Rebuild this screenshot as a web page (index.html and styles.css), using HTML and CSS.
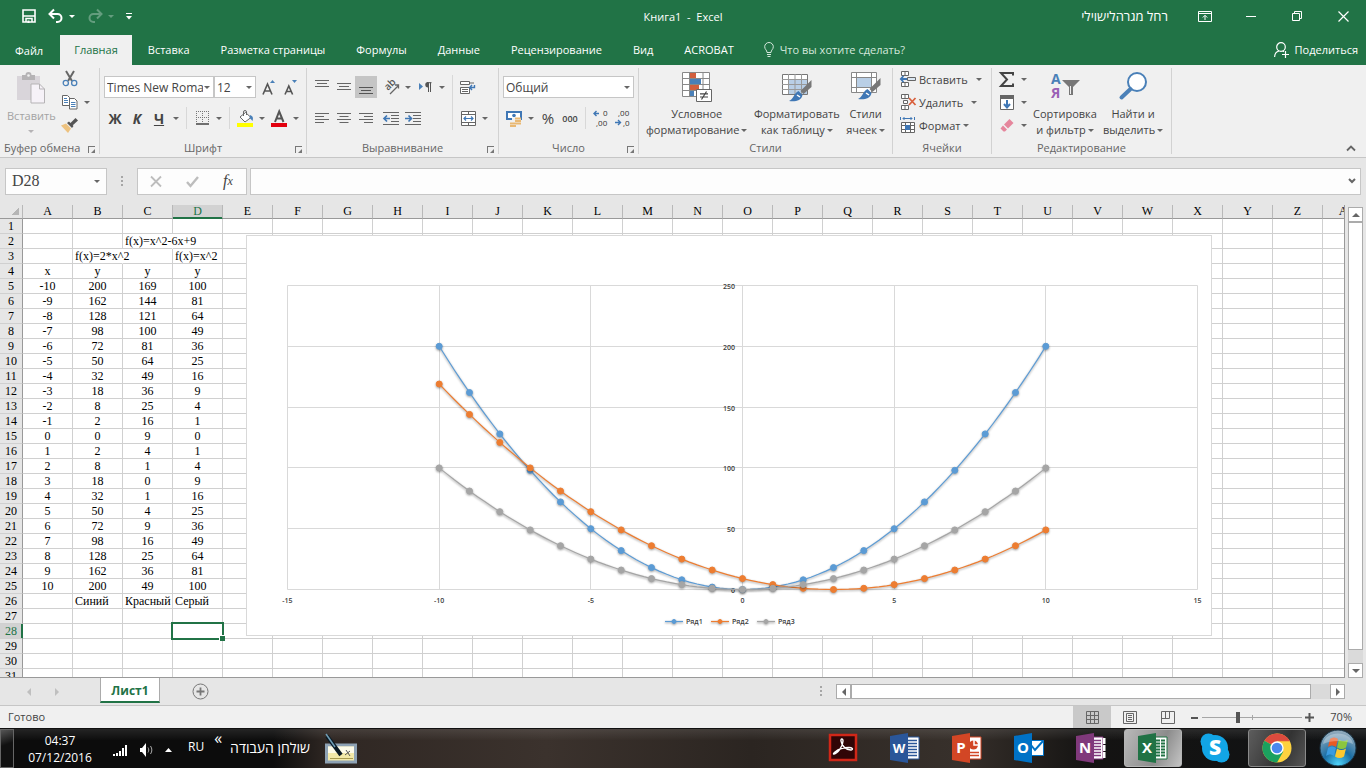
FILE: index.html
```html
<!DOCTYPE html>
<html lang="ru">
<head>
    <meta charset="UTF-8">
    <meta name="viewport" content="width=device-width, initial-scale=1.0">
    <title>Книга1 - Excel</title>
    <link rel="stylesheet" href="styles.css">
</head>
<body>
    <header class="titlebar">
        <div class="quick-access">
            <button class="quick" aria-label="Сохранить">
                <svg width="14" height="14" viewBox="0 0 14 14"><path d="M1 1h12v12H1z" fill="none" stroke="#fff" stroke-width="1.600"/><path d="M1 7h12M4 13v-3.500h6V13" fill="none" stroke="#fff" stroke-width="1.500"/><path d="M5.500 11.500h2V14h-2z" fill="#fff"/></svg>
            </button>
            <button class="quick" aria-label="Отменить">
                <svg width="16" height="14" viewBox="0 0 16 14"><path d="M2 5h7.500a4 4 0 0 1 0 8H8" fill="none" stroke="#fff" stroke-width="2"/><path d="M6 0.500L1.500 5 6 9.500" fill="none" stroke="#fff" stroke-width="2"/></svg>
                <i class="caret"></i>
            </button>
            <button class="quick faded" aria-label="Вернуть">
                <svg width="16" height="14" viewBox="0 0 16 14"><path d="M14 5H6.500a4 4 0 0 0 0 8H8" fill="none" stroke="#fff" stroke-width="2"/><path d="M10 0.500L14.500 5 10 9.500" fill="none" stroke="#fff" stroke-width="2"/></svg>
                <i class="caret"></i>
            </button>
            <button class="quick" aria-label="Настройка панели">
                <svg width="6" height="7" viewBox="0 0 6 7"><path d="M0 .5h6" stroke="#fff"/><path d="M0 3h6L3 6.500z" fill="#fff"/></svg>
            </button>
        </div>
        <h1 class="title">Книга1&nbsp; -&nbsp; Excel</h1>
        <div class="window-controls">
            <span class="user" dir="rtl">רחל מגרהלישוילי</span>
            <button aria-label="Параметры ленты"><svg width="14" height="11" viewBox="0 0 14 11"><path d="M.5.5h13v10H.5zM.5 2.500h13M7 9V4.500M4.800 6.500L7 4.300l2.200 2.200" fill="none" stroke="#fff"/></svg></button>
            <button aria-label="Свернуть"><svg width="10" height="10" viewBox="0 0 10 10"><path d="M0 5.500h10" stroke="#fff"/></svg></button>
            <button aria-label="Восстановить"><svg width="10" height="10" viewBox="0 0 10 10"><path d="M.5 2.500h7v7h-7zM2.500 2.500v-2h7v7h-2" fill="none" stroke="#fff"/></svg></button>
            <button aria-label="Закрыть"><svg width="11" height="11" viewBox="0 0 11 11"><path d="M.5.5l10 10M10.500.5l-10 10" stroke="#fff" stroke-width="1.2"/></svg></button>
        </div>
    </header>

    <nav class="tabs">
        <button class="tab file">Файл</button>
        <button class="tab active">Главная</button>
        <button class="tab">Вставка</button>
        <button class="tab">Разметка страницы</button>
        <button class="tab">Формулы</button>
        <button class="tab">Данные</button>
        <button class="tab">Рецензирование</button>
        <button class="tab">Вид</button>
        <button class="tab">ACROBAT</button>
        <button class="tell-me">
            <svg width="10" height="15" viewBox="0 0 10 15"><path d="M3 10.500C3 8 .700 7.500.700 4.700a4.300 4.200 0 0 1 8.600 0C9.300 7.500 7 8 7 10.500zM3 12.500h4M3.500 14.500h3" fill="none" stroke="#d5e8dc"/></svg>
            Что вы хотите сделать?
        </button>
        <button class="share">
            <svg width="15" height="16" viewBox="0 0 15 16"><circle cx="7" cy="5" r="4.300" fill="none" stroke="#fff" stroke-width="1.200"/><path d="M.6 15c.2-3.500 2-5.500 4.400-6M8.500 9l1.500.8M8 12.500h7M11.500 9v7" fill="none" stroke="#fff" stroke-width="1.200"/></svg>
            Поделиться
        </button>
    </nav>

    <section class="ribbon">
        <div class="group clipboard">
            <div class="group-body">
                <button class="big disabled">
                    <svg width="30" height="32" viewBox="0 0 30 32"><path d="M1 4h23v24H1z" fill="#d9d5da"/><path d="M6 3h3.500a3 3 0 0 1 6 0H19v5H6z" fill="#b5b3b5"/><circle cx="12.500" cy="3.500" r="1.300" fill="#f0f0f0"/><path d="M15 12h8.500l5 5v14H15z" fill="#f6f2f8" stroke="#b5b3b5"/><path d="M23.500 12v5h5" fill="none" stroke="#b5b3b5"/></svg>
                    <span>Вставить</span>
                    <i class="caret"></i>
                </button>
                <div class="stack">
                    <div class="row"><button class="tool" aria-label="Вырезать"><svg width="16" height="16" viewBox="0 0 16 16"><path d="M4 0l6 10M12 0L6 10" stroke="#666" stroke-width="2"/><circle cx="3.800" cy="12" r="2.600" fill="none" stroke="#4a80b8" stroke-width="1.300"/><circle cx="12.200" cy="12" r="2.600" fill="none" stroke="#4a80b8" stroke-width="1.300"/></svg></button></div>
                    <div class="row"><button class="tool" aria-label="Копировать"><svg width="16" height="15" viewBox="0 0 16 15"><path d="M.5.5h5l2 2v8h-7zM7.500 3.500h5l2.500 2.500v8H7.500z" fill="#fff" stroke="#666"/><path d="M2 3.500h3M2 5.500h4M2 7.500h4M9 7.500h4.500M9 9.500h4.500M9 11.500h4.500" stroke="#4a80b8"/></svg></button><button class="drop" aria-label="Ещё"><i class="caret"></i></button></div>
                    <div class="row"><button class="tool" aria-label="Формат по образцу"><svg width="17" height="15" viewBox="0 0 17 15"><path d="M0 7.500l5-2 5 5L7 15z" fill="#edc27f"/><path d="M6 5l2-1.500 4.500 4.500L11 10z" fill="#555"/><path d="M9 5.500L14.500 0 17 2.500 11 8z" fill="#555"/></svg></button></div>
                </div>
            </div>
            <footer class="group-foot">Буфер обмена<button class="launcher" aria-label="Параметры буфера"></button></footer>
        </div>

        <div class="group font">
            <div class="group-body lines">
                <div class="row">
                    <span class="combo font-name"><select aria-label="Шрифт"><option>Times New Roma</option></select></span>
                    <span class="combo font-size"><select aria-label="Размер шрифта"><option>12</option></select></span>
                    <button class="tool" aria-label="Увеличить размер"><svg width="14" height="17" viewBox="0 0 14 17"><path d="M1 15.500L5.500 5 10 15.500M2.500 12h6" fill="none" stroke="#555" stroke-width="1.600"/><path d="M8 4h5l-2.500-3z" fill="#4a80b8"/></svg></button>
                    <button class="tool" aria-label="Уменьшить размер"><svg width="14" height="17" viewBox="0 0 14 17"><path d="M1 15.500L4.800 7 8.600 15.500M2.300 12.500h5" fill="none" stroke="#555" stroke-width="1.600"/><path d="M8 1h5l-2.500 3z" fill="#4a80b8"/></svg></button>
                </div>
                <div class="row">
                    <button class="tool glyph">Ж</button>
                    <button class="tool glyph italic">К</button>
                    <button class="tool glyph under">Ч</button>
                    <button class="drop" aria-label="Подчёркивание"><i class="caret"></i></button>
                    <span class="sep"></span>
                    <button class="tool" aria-label="Границы"><svg width="13" height="14" viewBox="0 0 13 14"><path d="M.5 0v12M6.500 0v12M12.500 0v12M0 .5h13M0 6.500h13" stroke="#777" stroke-dasharray="1 1"/><path d="M0 13h13" stroke="#444" stroke-width="1.500"/></svg></button>
                    <button class="drop" aria-label="Виды границ"><i class="caret"></i></button>
                    <span class="sep"></span>
                    <button class="tool" aria-label="Цвет заливки"><svg width="17" height="17" viewBox="0 0 17 17"><path d="M3 7l5.500-4.500L14 7.500 8 12z" fill="#fff" stroke="#666"/><path d="M6.500 6V2a1.500 1.500 0 0 1 3 0v3" fill="none" stroke="#666"/><path d="M13 5c3 1 3.500 3 2.500 6-1-1-1.500-2-3-3z" fill="#4a80b8"/><path d="M0 13h16v4H0z" fill="#ff0"/></svg></button>
                    <button class="drop" aria-label="Цвета заливки"><i class="caret"></i></button>
                    <button class="tool" aria-label="Цвет текста"><svg width="17" height="17" viewBox="0 0 17 17"><path d="M4 12L8.200 1.500 12.500 12M5.500 8.500h5.500" fill="none" stroke="#555" stroke-width="2"/><path d="M0 13h16v4H0z" fill="#e3000f"/></svg></button>
                    <button class="drop" aria-label="Цвета текста"><i class="caret"></i></button>
                </div>
            </div>
            <footer class="group-foot">Шрифт<button class="launcher" aria-label="Параметры шрифта"></button></footer>
        </div>

        <div class="group align">
            <div class="group-body">
                <div class="lines">
                    <div class="row">
                        <button class="tool" aria-label="По верхнему краю"><svg width="14" height="14" viewBox="0 0 14 14"><path d="M0 .5h14M2 3.500h10M0 6.500h14" stroke="#666"/></svg></button>
                        <button class="tool" aria-label="По середине"><svg width="14" height="14" viewBox="0 0 14 14"><path d="M0 3.500h14M2 6.500h10M0 9.500h14" stroke="#666"/></svg></button>
                        <button class="tool pressed" aria-label="По нижнему краю"><svg width="14" height="14" viewBox="0 0 14 14"><path d="M0 7.500h14M2 10.500h10M0 13.500h14" stroke="#555"/></svg></button>
                        <span class="space"></span>
                        <button class="tool" aria-label="Ориентация"><svg width="20" height="20" viewBox="0 0 20 20"><text x="0" y="0" transform="translate(7 14) rotate(-45)" font-family="Open Sans" font-size="10" font-weight="600" fill="#555">ab</text><path d="M9 17L17.500 8.500M14 8h3.500v3.500" fill="none" stroke="#666" stroke-width="1.300"/></svg></button>
                        <button class="drop" aria-label="Виды ориентации"><i class="caret"></i></button>
                        <button class="tool" aria-label="Направление текста"><svg width="13" height="10" viewBox="0 0 13 10"><path d="M0 1v7l4-3.500z" fill="#4a80b8"/><path d="M12.500 .7H8M9.500.5V10M11.500.5V10" stroke="#555" fill="none"/><path d="M9 0a2.700 2.700 0 0 0 0 5.500z" fill="#555"/></svg></button>
                        <button class="drop" aria-label="Виды направления"><i class="caret"></i></button>
                    </div>
                    <div class="row">
                        <button class="tool" aria-label="По левому краю"><svg width="14" height="11" viewBox="0 0 14 11"><path d="M0 .5h14M0 3.500h9M0 6.500h14M0 9.500h9" stroke="#666"/></svg></button>
                        <button class="tool" aria-label="По центру"><svg width="14" height="11" viewBox="0 0 14 11"><path d="M0 .5h14M2.500 3.500h9M0 6.500h14M2.500 9.500h9" stroke="#666"/></svg></button>
                        <button class="tool" aria-label="По правому краю"><svg width="14" height="11" viewBox="0 0 14 11"><path d="M0 .5h14M5 3.500h9M0 6.500h14M5 9.500h9" stroke="#666"/></svg></button>
                        <span class="space"></span>
                        <button class="tool" aria-label="Уменьшить отступ"><svg width="16" height="13" viewBox="0 0 16 13"><path d="M0 .5h16M8 3.500h8M8 6.500h8M8 9.500h8M0 12.500h16" stroke="#666"/><path d="M7 6.500H1.500M4 3.500l-3 3 3 3" fill="none" stroke="#3f77b5" stroke-width="1.700"/></svg></button>
                        <button class="tool" aria-label="Увеличить отступ"><svg width="16" height="13" viewBox="0 0 16 13"><path d="M0 .5h16M8 3.500h8M8 6.500h8M8 9.500h8M0 12.500h16" stroke="#666"/><path d="M0 6.500h6M3.500 3.500l3 3-3 3" fill="none" stroke="#3f77b5" stroke-width="1.700"/></svg></button>
                    </div>
                </div>
                <span class="sep tall"></span>
                <div class="lines">
                    <div class="row"><button class="tool" aria-label="Перенести текст"><svg width="16" height="15" viewBox="0 0 16 15"><path d="M.5 1.500h9v3h-9zM.5 7.500h9v6h-9z" fill="#fff" stroke="#666"/><path d="M2 9.500h6M2 11.500h6M10 3h4" stroke="#666"/><path d="M14.500 5v2.500H10M12 5L9.700 7.500 12 10" fill="none" stroke="#3f77b5" stroke-width="1.400"/></svg></button></div>
                    <div class="row"><button class="tool" aria-label="Объединить"><svg width="15" height="15" viewBox="0 0 15 15"><path d="M.5.5h14v14H.5zM.5 3.500h14M.5 11.500h14M7.500.5v3M7.500 11.500v3" fill="#fff" stroke="#666"/><path d="M3 7.500h9M5 5.500l-2 2 2 2M10 5.500l2 2-2 2" fill="none" stroke="#3f77b5" stroke-width="1.200"/></svg></button><button class="drop" aria-label="Виды объединения"><i class="caret"></i></button></div>
                </div>
            </div>
            <footer class="group-foot">Выравнивание<button class="launcher" aria-label="Параметры выравнивания"></button></footer>
        </div>

        <div class="group number">
            <div class="group-body lines">
                <div class="row"><span class="combo format"><select aria-label="Числовой формат"><option>Общий</option></select></span></div>
                <div class="row">
                    <button class="tool" aria-label="Финансовый формат"><svg width="16" height="17" viewBox="0 0 16 17"><path d="M1 2h14v7H1z" fill="#fff" stroke="#3f77b5" stroke-width="2"/><circle cx="8" cy="5.500" r="1.800" fill="#3f77b5"/><path d="M6 8h9v3H6z" fill="#f0f0f0"/><path d="M9 8.500h6M9 11h6M4 13.500h6M4 16h6M10 13.500h5" stroke="#e9b872" stroke-width="2"/></svg></button>
                    <button class="drop" aria-label="Валюты"><i class="caret"></i></button>
                    <button class="tool percent">%</button>
                    <button class="tool zeros">000</button>
                    <span class="sep"></span>
                    <button class="tool" aria-label="Увеличить разрядность"><svg width="16" height="22" viewBox="0 0 16 22"><path d="M6 6.500H1M3.500 4L1 6.500 3.500 9" fill="none" stroke="#3f77b5" stroke-width="1.400"/><text x="10" y="9" font-family="Open Sans" font-size="8" fill="#333">0</text><text x="3" y="19" font-family="Open Sans" font-size="8" fill="#333">,00</text></svg></button>
                    <button class="tool" aria-label="Уменьшить разрядность"><svg width="16" height="22" viewBox="0 0 16 22"><text x="3" y="9" font-family="Open Sans" font-size="8" fill="#333">,00</text><path d="M0 15.500h5M3 13l2.500 2.500L3 18" fill="none" stroke="#3f77b5" stroke-width="1.400"/><text x="8" y="19" font-family="Open Sans" font-size="8" fill="#333">,0</text></svg></button>
                </div>
            </div>
            <footer class="group-foot">Число<button class="launcher" aria-label="Параметры числа"></button></footer>
        </div>

        <div class="group styles">
            <div class="group-body">
                <button class="big">
                    <svg width="30" height="31" viewBox="0 0 30 31"><path d="M.5 1.500h27v24H.5zM7.500 1.500v24M21 1.500v24M.5 7.500h27M.5 13.500h27M.5 19.500h27" fill="#fff" stroke="#888"/><path d="M8 2h6v5H8zM8 14h9v5H8z" fill="#d35f3e"/><path d="M8 8h11v5H8zM8 20h4v5H8z" fill="#4a80b8"/><path d="M14.500 18.500h15v12h-15z" fill="#fff" stroke="#666"/><path d="M18 22.800h8M18 26h8M24.500 20.500l-5 8" stroke="#444" stroke-width="1.200"/></svg>
                    <span>Условное<br>форматирование<i class="caret"></i></span>
                </button>
                <button class="big">
                    <svg width="30" height="31" viewBox="0 0 30 31"><path d="M.5 3.500h25v20H.5z" fill="#fff" stroke="#777"/><path d="M7 9h18v14H7z" fill="#b9cfe6"/><path d="M6.500 3v20M13 3v20M19.500 3v20M0 8.500h25M0 13.500h25M0 18.500h25" stroke="#999"/><path d="M29.500 9v7l-8 7-3-3z" fill="#777"/><path d="M16.500 20l4 4c-1 6-8 7-13.500 6 4-1 5-8 9.500-10z" fill="#3f77b5"/><path d="M15 24l3 2" stroke="#fff" stroke-width="1.500"/></svg>
                    <span>Форматировать<br>как таблицу<i class="caret"></i></span>
                </button>
                <button class="big">
                    <svg width="30" height="31" viewBox="0 0 30 31"><path d="M.5 1.500h25v20H.5zM5.500 1.500v20M20.500 1.500v20M.5 6.500h25M.5 16.500h25" fill="#fff" stroke="#888"/><path d="M6 7h14v9H6z" fill="#b9cfe6"/><path d="M29.500 7v7l-8 7-3-3z" fill="#777"/><path d="M16.500 18l4 4c-1 6-8 7-13.500 6 4-1 5-8 9.500-10z" fill="#3f77b5"/><path d="M15 22l3 2" stroke="#fff" stroke-width="1.500"/></svg>
                    <span>Стили<br>ячеек<i class="caret"></i></span>
                </button>
            </div>
            <footer class="group-foot">Стили</footer>
        </div>

        <div class="group cells">
            <div class="group-body stack">
                <button class="wide"><svg width="16" height="16" viewBox="0 0 16 16"><path d="M1.500.5h7v4h-7zM5 .5v4M1.500 11.500h7v4h-7zM5 11.500v4" fill="#fff" stroke="#666"/><path d="M7.500 6.500h8v3h-8z" fill="#dbe7f3" stroke="#666"/><path d="M7 8H1M3.500 5L.8 8l2.700 3" fill="none" stroke="#3f77b5" stroke-width="1.800"/></svg><span>Вставить</span><i class="caret apart"></i></button>
                <button class="wide"><svg width="16" height="16" viewBox="0 0 16 16"><path d="M1.500.5h7v4h-7zM5 .5v4M1.500 11.500h7v4h-7zM5 11.500v4M3.500 6.500h4v3h-4z" fill="#fff" stroke="#666"/><path d="M9 4l6.500 7M15.500 4L9 11" stroke="#d9603d" stroke-width="1.800"/></svg><span>Удалить</span><i class="caret apart"></i></button>
                <button class="wide"><svg width="16" height="16" viewBox="0 0 16 16"><path d="M1.500 5.500h13v10h-13zM1.500 8.500h13M1.500 12.500h13M5.500 5.500v10M10.500 5.500v10" fill="#fff" stroke="#666"/><path d="M5 8h5v5H5z" fill="#3f77b5"/><path d="M3 1.500h9M4.500 0L3 1.500 4.500 3M10.500 0L12 1.500 10.500 3M.5 0v3M14.500 0v3" fill="none" stroke="#3f77b5"/></svg><span>Формат</span><i class="caret"></i></button>
            </div>
            <footer class="group-foot">Ячейки</footer>
        </div>

        <div class="group editing">
            <div class="group-body">
                <div class="stack">
                    <div class="row"><button class="tool" aria-label="Сумма"><svg width="16" height="15" viewBox="0 0 16 15"><path d="M14 3.500V1H2l6 6.500L2 14h12v-2.500" fill="none" stroke="#444" stroke-width="2"/></svg></button><button class="drop" aria-label="Функции"><i class="caret"></i></button></div>
                    <div class="row"><button class="tool" aria-label="Заполнить"><svg width="14" height="15" viewBox="0 0 14 15"><path d="M.5.500h13v14H.5z" fill="#fff" stroke="#666"/><path d="M0 0h14v4H0z" fill="#666"/><path d="M7 5v7M4 9l3 3.500L10 9" fill="none" stroke="#3f77b5" stroke-width="2"/></svg></button><button class="drop" aria-label="Направления"><i class="caret"></i></button></div>
                    <div class="row"><button class="tool" aria-label="Очистить"><svg width="14" height="13" viewBox="0 0 14 13"><path d="M4 5.500L9.500 0 13.500 4 8 9.500z" fill="#e5869c"/><path d="M3 6.500l4 4L5 12.500H3.500L.5 9.500z" fill="#e5869c"/></svg></button><button class="drop" aria-label="Виды очистки"><i class="caret"></i></button></div>
                </div>
                <button class="big">
                    <svg width="30" height="31" viewBox="0 0 30 31"><text x="1" y="13" font-family="Open Sans" font-size="14" font-weight="700" fill="#4a80b8">А</text><text x="1" y="27" font-family="Open Sans" font-size="14" font-weight="700" fill="#9a5fb5">Я</text><path d="M12 9h18l-7 7v8h-4v-8z" fill="#777"/><path d="M20.500 15v8" stroke="#f0f0f0"/></svg>
                    <span>Сортировка<br>и фильтр<i class="caret"></i></span>
                </button>
                <button class="big">
                    <svg width="30" height="31" viewBox="0 0 30 31"><circle cx="19" cy="11" r="9" fill="#fff" stroke="#4a80b8" stroke-width="2"/><path d="M12.500 18L3.500 26.500" stroke="#4a80b8" stroke-width="4" stroke-linecap="round"/></svg>
                    <span>Найти и<br>выделить<i class="caret"></i></span>
                </button>
            </div>
            <footer class="group-foot">Редактирование</footer>
        </div>

        <button class="collapse" aria-label="Свернуть ленту"><svg width="10" height="7" viewBox="0 0 10 7"><path d="M1 5.500l4-4 4 4" fill="none" stroke="#666" stroke-width="1.800"/></svg></button>
    </section>

    <section class="formula-bar">
        <span class="name-box"><input type="text" value="D28" aria-label="Имя"><i class="caret"></i></span>
        <span class="grip"></span>
        <div class="fx-box">
            <button aria-label="Отмена"><svg width="12" height="11" viewBox="0 0 12 11"><path d="M1 .5l10 10M11 .5L1 10.500" stroke="#bdbdbd" stroke-width="1.800"/></svg></button>
            <button aria-label="Ввод"><svg width="13" height="11" viewBox="0 0 13 11"><path d="M1 6l3.500 4L12 1" fill="none" stroke="#bdbdbd" stroke-width="2.400"/></svg></button>
            <button class="fx" aria-label="Вставить функцию">f<small>x</small></button>
        </div>
        <div class="formula-box">
            <input type="text" aria-label="Строка формул">
            <svg width="8" height="6" viewBox="0 0 8 6"><path d="M1 1l3 3 3-3" fill="none" stroke="#666" stroke-width="2"/></svg>
        </div>
    </section>

    <main class="workspace">
        <div class="sheet">
            <table class="grid">
                <thead><tr id="columns"></tr></thead>
                <tbody id="rows"></tbody>
            </table>
            <svg class="chart" id="chart" width="966" height="401" viewBox="0 0 966 401" role="img" aria-label="Графики функций"></svg>
        </div>
        <div class="scroll-v">
            <button aria-label="Вверх"><i class="arrow up"></i></button>
            <div class="track"><div class="thumb"></div></div>
            <button aria-label="Вниз"><i class="arrow down"></i></button>
        </div>
    </main>

    <div class="sheet-bar">
        <button class="nav-arrow" aria-label="Предыдущий лист"><i class="arrow left"></i></button>
        <button class="nav-arrow" aria-label="Следующий лист"><i class="arrow right"></i></button>
        <button class="sheet-tab">Лист1</button>
        <button class="add-sheet" aria-label="Новый лист"><svg width="17" height="17" viewBox="0 0 17 17"><circle cx="8.500" cy="8.500" r="7.500" fill="none" stroke="#777"/><path d="M4.500 8.500h8M8.500 4.500v8" stroke="#777" stroke-width="1.800"/></svg></button>
        <span class="grip"></span>
        <div class="scroll-h">
            <button aria-label="Влево"><i class="arrow left"></i></button>
            <div class="track"><div class="thumb"></div></div>
            <button aria-label="Вправо"><i class="arrow right"></i></button>
        </div>
    </div>

    <footer class="status-bar">
        <span class="status">Готово</span>
        <button class="view active" aria-label="Обычный"><svg width="13" height="13" viewBox="0 0 13 13"><path d="M.5.5h12v12H.5zM4.500.5v12M8.500.5v12M.5 4.500h12M.5 8.500h12" fill="none" stroke="#666"/></svg></button>
        <button class="view" aria-label="Разметка страницы"><svg width="14" height="13" viewBox="0 0 14 13"><path d="M.5.5h13v12H.5zM3.500 2.500h7v8h-7zM5 4.500h4M5 6.500h4M5 8.500h4" fill="none" stroke="#666"/></svg></button>
        <button class="view" aria-label="Страничный режим"><svg width="14" height="13" viewBox="0 0 14 13"><path d="M.5.5h13v12H.5zM4.500.5v7M.5 7.500h8V.5" fill="none" stroke="#666"/></svg></button>
        <button class="zoom-step" aria-label="Уменьшить"><svg width="9" height="9" viewBox="0 0 9 9"><path d="M1 5h7" stroke="#555" stroke-width="2"/></svg></button>
        <input class="zoom" type="range" min="0" max="100" value="35" aria-label="Масштаб">
        <button class="zoom-step" aria-label="Увеличить"><svg width="9" height="9" viewBox="0 0 9 9"><path d="M0 4.500h9M4.500 0v9" stroke="#555" stroke-width="2"/></svg></button>
        <span class="zoom-value">70%</span>
    </footer>

    <footer class="taskbar">
        <button class="show-desktop" aria-label="Показать рабочий стол"></button>
        <time class="clock">04:37<br>07/12/2016</time>
        <div class="tray">
            <svg width="15" height="12" viewBox="0 0 15 12"><path d="M0 10h2v2H0zM3 9h2v3H3zM6 7h2v5H6zM9 4h2v8H9zM12 1h2v11h-2z" fill="#fff"/></svg>
            <svg width="13" height="14" viewBox="0 0 13 14"><path d="M0 5h2l4-5v14L2 9H0z" fill="#fff"/><path d="M8 4.500c1 1.500 1 3.500 0 5M10.500 3c1.800 2.500 1.800 5.500 0 8" fill="none" stroke="#aaa"/></svg>
            <svg width="7" height="4" viewBox="0 0 7 4"><path d="M0 4h7L3.500 0z" fill="#fff"/></svg>
        </div>
        <span class="lang">RU</span>
        <span class="chevrons">«</span>
        <span class="desktop" dir="rtl">שולחן העבודה</span>
        <svg width="33" height="29" viewBox="0 0 33 29"><path d="M1.500 11h29v17h-29z" fill="#f2e9a8" stroke="#8ea2b4" stroke-width="3"/><path d="M3 12.500h26V19H3z" fill="#fdfbe8"/><path d="M5 24.500h23" stroke="#a89c50"/><path d="M21 16l4 6M25 17l-5 4" stroke="#555"/><path d="M2 2l14 19" stroke="#0b1a24" stroke-width="4"/><path d="M1 0l9 13" stroke="#6f9db5" stroke-width="1.500"/></svg>
        <div class="apps">
            <button class="app" aria-label="Adobe Reader"><svg width="30" height="30" viewBox="0 0 30 30"><path d="M2 2h26v25H2z" fill="#300506" stroke="#d02718" stroke-width="2.500"/><path d="M6 21c3-.5 9-7 9-13 0-3-2.500-2.500-2 0 .7 5 5 9 10 9 3-.5 1-2.500-2-2.500-5 0-11 2-14 4.500-1.500 1.500-2 2-1 2z" fill="none" stroke="#fff" stroke-width="1.400"/></svg></button>
            <button class="app" aria-label="Word"><svg width="30" height="30" viewBox="0 0 30 30"><path d="M16 4h13v22H16z" fill="#fff" stroke="#2a5699"/><path d="M18 7.500h9M18 10.500h9M18 13.500h9M18 16.500h9M18 19.500h9M18 22.500h9" stroke="#2a5699" stroke-width="1.400"/><path d="M0 3l18-3v30L0 27z" fill="#2a5699"/><text x="9" y="20" text-anchor="middle" font-family="Open Sans" font-size="13" font-weight="700" fill="#fff">W</text></svg></button>
            <button class="app" aria-label="PowerPoint"><svg width="30" height="30" viewBox="0 0 30 30"><path d="M16 4h13v22H16z" fill="#fff" stroke="#d24625"/><circle cx="21.500" cy="12" r="4.500" fill="#d24625"/><path d="M22 7v5h5" fill="none" stroke="#fff" stroke-width="1.500"/><path d="M18 19.500h9M18 22.500h9" stroke="#d24625" stroke-width="1.400"/><path d="M0 3l18-3v30L0 27z" fill="#d24625"/><text x="9" y="20" text-anchor="middle" font-family="Open Sans" font-size="15" font-weight="700" fill="#fff">P</text></svg></button>
            <button class="app" aria-label="Outlook"><svg width="30" height="30" viewBox="0 0 30 30"><path d="M16 7.500h13.500v15H16z" fill="#fff" stroke="#0072c6"/><path d="M17 12l4 5 8-9" fill="none" stroke="#0072c6" stroke-width="2"/><path d="M0 3l18-3v30L0 27z" fill="#0072c6"/><text x="9" y="20" text-anchor="middle" font-family="Open Sans" font-size="15" font-weight="700" fill="#fff">O</text></svg></button>
            <button class="app" aria-label="OneNote"><svg width="30" height="30" viewBox="0 0 30 30"><path d="M16 4h11v22H16z" fill="#fff" stroke="#80397b"/><path d="M27 5h2.500v6H27zM27 12h2.500v6H27zM27 19h2.500v6H27z" fill="#fff"/><path d="M18 7.500h7M18 10.500h7M18 13.500h7M18 16.500h7M18 19.500h7M18 22.500h7" stroke="#80397b" stroke-width="1.400"/><path d="M0 3l18-3v30L0 27z" fill="#80397b"/><text x="9" y="20" text-anchor="middle" font-family="Open Sans" font-size="15" font-weight="700" fill="#fff">N</text></svg></button>
            <button class="app current" aria-label="Excel"><svg width="30" height="30" viewBox="0 0 30 30"><path d="M16 4h13v22H16z" fill="#fff" stroke="#207245"/><path d="M18 7.500h9M18 10.500h9M18 13.500h9M18 16.500h9M18 19.500h9M18 22.500h9" stroke="#207245" stroke-width="2"/><path d="M22.500 5v20" stroke="#fff"/><path d="M0 3l18-3v30L0 27z" fill="#207245"/><text x="9" y="20" text-anchor="middle" font-family="Open Sans" font-size="15" font-weight="700" fill="#fff">X</text></svg></button>
            <button class="app" aria-label="Skype"><svg width="30" height="30" viewBox="0 0 30 30"><circle cx="15" cy="15" r="13" fill="#12a5e6"/><circle cx="8.500" cy="8.500" r="8" fill="#12a5e6"/><circle cx="21.500" cy="21.500" r="8" fill="#12a5e6"/><text x="15" y="22" text-anchor="middle" font-family="Open Sans" font-size="21" font-weight="800" fill="#fff">S</text></svg></button>
            <button class="app open" aria-label="Chrome"><svg width="30" height="30" viewBox="0 0 30 30"><circle cx="15" cy="15" r="14.500" fill="#fdd23f"/><path d="M15 15L2.440 7.750A14.500 14.500 0 0 1 27.560 7.750H15z" fill="#dd4b3e"/><path d="M15 15L2.440 7.750A14.500 14.500 0 0 0 15 29.500L21.300 18.600z" fill="#1ba15f"/><path d="M15 7.750h12.560" stroke="#dd4b3e"/><circle cx="15" cy="15" r="6.700" fill="#fff"/><circle cx="15" cy="15" r="5.300" fill="#4a88ee"/></svg></button>
            <button class="app" aria-label="Пуск">
                <svg width="38" height="38" viewBox="0 0 38 38">
                    <defs><radialGradient id="orb" cx=".5" cy=".95" r=".9"><stop offset="0" stop-color="#4fd4fa"/><stop offset=".45" stop-color="#1a6ea5"/><stop offset="1" stop-color="#8fa9bb"/></radialGradient></defs>
                    <circle cx="19" cy="19" r="18" fill="url(#orb)" stroke="#1a3446"/>
                    <path d="M11 10c3-2 5-2 8 0l-2 8c-3-2-5-2-8 0z" fill="#ea5a24"/><path d="M20 10.500c3 2 6 2 9 0l-2 8c-3 2-6 2-9 0z" fill="#8cc63e"/><path d="M9 19c3-2 5-2 8 0l-2 8c-3-2-5-2-8 0z" fill="#3b9be0"/><path d="M18 19.500c3 2 6 2 9 0l-2 8c-3 2-6 2-9 0z" fill="#fdc82f"/>
                    <path d="M4 15C6 1 32 1 34 15c-8-4-22-4-30 0z" fill="#fff" opacity=".3"/>
                </svg>
            </button>
        </div>
    </footer>

    <script>
        const letters = 'ABCDEFGHIJKLMNOPQRSTUVWXYZ'.split('').concat('AA');
        const rowCount = 31;
        const selected = { col: 3, row: 28 };

        const series = [
            { name: 'Ряд1', color: '#5b9bd5', fn: x => 2 * x * x },
            { name: 'Ряд2', color: '#ed7d31', fn: x => x * x - 6 * x + 9 },
            { name: 'Ряд3', color: '#a5a5a5', fn: x => x * x }
        ];

        // cell text, keyed by address
        const cells = {
            C2: 'f(x)=x^2-6x+9', B3: 'f(x)=2*x^2', D3: 'f(x)=x^2',
            A4: 'x', B4: 'y', C4: 'y', D4: 'y',
            B26: 'Синий', C26: 'Красный', D26: 'Серый'
        };
        for (let x = -10; x <= 10; x++) {
            cells['A' + (x + 15)] = x;
            series.forEach((s, i) => cells[letters[i + 1] + (x + 15)] = s.fn(x));
        }
        // cells whose text runs into the next column
        const spills = ['C2', 'B3'];

        function buildGrid() {
            document.getElementById('columns').innerHTML = '<th class="corner"></th>' + letters.map((l, i) =>
                `<th class="${i === selected.col ? 'current' : ''}">${l}</th>`).join('');

            let html = '';
            for (let r = 1; r <= rowCount; r++) {
                html += `<tr><th class="${r === selected.row ? 'current' : ''}">${r}</th>`;
                letters.forEach((l, c) => {
                    const key = l + r;
                    const text = key in cells ? cells[key] : '';
                    const names = [];
                    if (r >= 4 && r <= 25) names.push('center');
                    if (spills.includes(key)) names.push('spill');
                    if (c === selected.col && r === selected.row) names.push('selected');
                    html += `<td class="${names.join(' ')}">${text}</td>`;
                });
                html += '</tr>';
            }
            document.getElementById('rows').innerHTML = html;
        }

        function buildChart() {
            const left = 41.5, right = 951.5, top = 50.5, bottom = 354.5;
            const px = x => left + (x + 15) * (right - left) / 30;
            const py = y => bottom - y * (bottom - top) / 250;
            let svg = '<rect class="frame" x="0.5" y="0.5" width="965" height="400"/>';

            for (let x = -15; x <= 15; x += 5) {
                svg += `<line class="gridline" x1="${Math.floor(px(x)) + 0.5}" x2="${Math.floor(px(x)) + 0.5}" y1="${top}" y2="${bottom}"/>`;
                svg += `<text x="${px(x)}" y="368" text-anchor="middle">${x}</text>`;
            }
            for (let y = 0; y <= 250; y += 50) {
                const gy = Math.floor(py(y)) + 0.5;
                svg += `<line class="gridline" x1="${left}" x2="${right}" y1="${gy}" y2="${gy}"/>`;
                svg += `<text x="489" y="${gy + 3}" text-anchor="end">${y}</text>`;
            }

            series.forEach((s, i) => {
                const points = [];
                for (let x = -10; x <= 10; x += 0.25) {
                    points.push(`${px(x).toFixed(1)},${py(s.fn(x)).toFixed(1)}`);
                }
                svg += `<g class="series" fill="${s.color}" stroke="${s.color}"><polyline points="${points.join(' ')}"/>`;
                for (let x = -10; x <= 10; x++) {
                    svg += `<circle cx="${px(x).toFixed(1)}" cy="${py(s.fn(x)).toFixed(1)}" r="3"/>`;
                }
                const lx = 419 + i * 46;
                svg += `<path d="M${lx} 386.5h18"/><circle cx="${lx + 9}" cy="386.5" r="2"/></g>`;
                svg += `<text x="${lx + 21}" y="389">${s.name}</text>`;
            });
            document.getElementById('chart').innerHTML = svg;
        }

        buildGrid();
        buildChart();
    </script>
</body>
</html>
```
FILE: styles.css
```css
:root {
    --green: #217346;
    --ribbon: #f0f0f0;
    --chrome: #e6e6e6;
    --line: #c6c6c6;
    --gridline: #d0d0d0;
    --text: #444444;
    --ui: 'Open Sans', 'Noto Sans', sans-serif;
    --serif: 'Liberation Serif', 'Times New Roman', serif;
}

* {
    box-sizing: border-box;
}

body {
    margin: 0;
    height: 100vh;
    display: flex;
    flex-direction: column;
    overflow: hidden;
    font-family: var(--ui);
    font-size: 11px;
    color: var(--text);
    background: var(--chrome);
}

button, input, select {
    font: inherit;
    color: inherit;
    background: none;
    border: none;
    border-radius: 0;
    padding: 0;
    margin: 0;
}

button {
    display: flex;
    align-items: center;
    justify-content: center;
}

svg {
    display: block;
    flex: none;
    overflow: visible;
}

.caret {
    display: inline-block;
    flex: none;
    border: 3px solid transparent;
    border-top-color: #666;
    border-bottom: none;
}

/* title bar */
.titlebar {
    display: flex;
    align-items: center;
    flex: none;
    height: 32px;
    background: var(--green);
    color: #fff;
}

.quick-access, .window-controls {
    flex: 1;
    display: flex;
    align-items: center;
}

.quick-access {
    gap: 12px;
}

.quick {
    gap: 5px;
}

.quick:first-child {
    margin-left: 22px;
}

.quick .caret {
    border-top-color: #fff;
}

.faded {
    opacity: 0.3;
}

.title {
    margin: 0;
    font-size: 11px;
    font-weight: 400;
}

.window-controls {
    justify-content: flex-end;
}

.window-controls button {
    width: 46px;
    height: 32px;
}

.user {
    margin-right: 14px;
    font-size: 13px;
}

/* ribbon tabs */
.tabs {
    display: flex;
    flex: none;
    height: 33px;
    padding-top: 3px;
    background: var(--green);
    color: #fff;
}

.tab {
    padding: 0 15px 1px 16px;
}

.tab.file {
    padding: 0 17px 0 15px;
}

.tab.active {
    padding: 0 14px 1px;
    background: var(--ribbon);
    color: var(--green);
}

.tell-me, .share {
    gap: 6px;
    padding: 0 15px 1px;
    color: #d5e8dc;
}

.share {
    margin-left: auto;
    padding: 0 8px 1px;
    color: #fff;
}

/* ribbon */
.ribbon {
    display: flex;
    flex: none;
    height: 93px;
    background: var(--ribbon);
    border-bottom: 1px solid var(--line);
}

.group {
    display: flex;
    flex-direction: column;
    margin: 3px 0;
    padding: 0 4px;
    border-right: 1px solid #d2d2d2;
}

.group-body {
    display: flex;
    flex: 1;
}

.group-foot {
    position: relative;
    height: 12px;
    line-height: 12px;
    text-align: center;
    color: #666;
}

.clipboard { width: 100px; }
.font { width: 207px; }
.align { width: 192px; }
.number { width: 140px; }
.styles { width: 254px; }
.cells { width: 99px; }
.editing { width: 180px; }

.clipboard .group-foot {
    padding-right: 16px;
    white-space: nowrap;
}

.launcher {
    position: absolute;
    right: 0;
    bottom: 1px;
    width: 7px;
    height: 7px;
    border-top: 1px solid #777;
    border-left: 1px solid #777;
}

.launcher::after {
    content: '';
    position: absolute;
    right: 0;
    bottom: 0;
    border: 2px solid #777;
    border-top-color: transparent;
    border-left-color: transparent;
}

.lines {
    display: flex;
    flex-direction: column;
    gap: 9px;
    padding-top: 8px;
}

.stack {
    display: flex;
    flex-direction: column;
    gap: 1px;
}

.row {
    display: flex;
    align-items: center;
    height: 22px;
}

.tool {
    width: 22px;
    height: 22px;
}

.space {
    width: 3px;
}

.pressed {
    background: #c5c5c5;
}

.drop {
    width: 12px;
    height: 22px;
}

.sep {
    width: 1px;
    height: 22px;
    margin: 0 4px;
    background: #d8d8d8;
}

.sep.tall {
    height: 55px;
    margin-top: 7px;
}

.glyph {
    font-size: 14px;
    font-weight: 700;
}

.italic {
    font-style: italic;
}

.under {
    text-decoration: underline;
}

.percent {
    font-size: 15px;
}

.zeros {
    font-size: 9px;
    font-weight: 600;
}

.combo {
    position: relative;
    height: 22px;
    background: #fff;
    border: 1px solid var(--line);
    font-size: 12px;
}

.combo select {
    appearance: none;
    width: 100%;
    height: 20px;
    padding: 0 10px 0 2px;
}

.combo::after {
    content: '';
    position: absolute;
    right: 3px;
    top: 9px;
    border: 3px solid transparent;
    border-top-color: #666;
    border-bottom: none;
}

.font-name { width: 111px; }
.font-size { width: 43px; margin-right: 2px; }
.format { width: 131px; }

.big {
    flex-direction: column;
    justify-content: flex-start;
    padding: 3px 3px 0;
    line-height: 16px;
    white-space: nowrap;
}

.big span {
    padding-top: 4px;
}

.big .caret {
    margin-left: 2px;
    vertical-align: 2px;
}

.disabled {
    padding-top: 4px;
    color: #a3a3a3;
}

.disabled .caret {
    margin: 6px 0 0;
    border-top-color: #b5b3b5;
}

.styles .group-body {
    justify-content: space-between;
}

.wide {
    justify-content: flex-start;
    height: 22px;
    padding-left: 3px;
    gap: 3px;
}

.apart {
    margin-left: 5px;
}

.collapse {
    align-self: flex-end;
    margin-left: auto;
    padding: 5px 10px;
}

/* formula bar */
.formula-bar {
    display: flex;
    align-items: center;
    flex: none;
    height: 47px;
    padding: 0 5px 1px;
}

.name-box, .fx-box, .formula-box {
    display: flex;
    align-items: center;
    height: 27px;
    background: #fdfdfd;
    border: 1px solid var(--line);
}

.name-box {
    width: 102px;
    padding: 0 6px;
    font-family: var(--serif);
    font-size: 16px;
}

.name-box input {
    width: 100%;
}

.grip {
    width: 2px;
    height: 11px;
    margin: 0 14px;
    background: repeating-linear-gradient(#a6a6a6 0 2px, transparent 2px 4px);
}

.fx-box {
    width: 110px;
    margin-right: 3px;
}

.fx-box button {
    flex: 1;
}

.fx-box .fx {
    font-family: var(--serif);
    font-size: 16px;
    font-style: italic;
}

.fx small {
    font-size: 12px;
}

.formula-box {
    flex: 1;
    padding-right: 4px;
}

.formula-box input {
    flex: 1;
}

/* worksheet */
.workspace {
    display: flex;
    flex: 1;
    min-height: 0;
}

.sheet {
    position: relative;
    flex: 1;
    overflow: hidden;
    background: #fff;
    border-right: 1px solid #999;
    border-bottom: 1px solid #999;
}

.grid {
    table-layout: fixed;
    width: 1373px;
    border-collapse: separate;
    border-spacing: 0;
    font-family: var(--serif);
    font-size: 12px;
    line-height: 14px;
    color: #000;
}

.grid th {
    padding: 0;
    font-weight: 400;
    background: var(--chrome);
}

.grid thead th {
    width: 50px;
    height: 14px;
    line-height: 13px;
    border-bottom: 1px solid #999;
    border-right: 1px solid #b8b8b8;
}

.grid thead .corner {
    width: 23px;
    background: linear-gradient(135deg, transparent 50%, #b5b5b5 50%) right 3px bottom 3px / 8px 7px no-repeat var(--chrome);
}

.grid tbody th {
    border-right: 1px solid #999;
    border-bottom: 1px solid var(--gridline);
}

.grid td {
    height: 15px;
    padding: 0 0 0 2px;
    white-space: nowrap;
    border-right: 1px solid var(--gridline);
    border-bottom: 1px solid var(--gridline);
}

.grid .center {
    padding: 0;
    text-align: center;
}

.grid .spill {
    border-right-color: transparent;
}

.grid th.current {
    color: var(--green);
    background: #d2d2d2;
}

.grid thead .current {
    box-shadow: inset 0 -1px var(--green);
    border-bottom-color: var(--green);
}

.grid tbody .current {
    box-shadow: inset -1px 0 var(--green);
    border-right-color: var(--green);
}

.selected {
    position: relative;
}

.selected::before {
    content: '';
    position: absolute;
    inset: -2px;
    border: 2px solid var(--green);
}

.selected::after {
    content: '';
    position: absolute;
    right: -3px;
    bottom: -3px;
    width: 5px;
    height: 5px;
    background: var(--green);
    box-shadow: -1px -1px #fff;
}

/* chart floats over the cells */
.chart {
    position: absolute;
    left: 246px;
    top: 30px;
    font-size: 7px;
    font-weight: 600;
    fill: #404040;
}

.frame {
    fill: #fff;
    stroke: #d9d9d9;
}

.gridline {
    stroke: #d9d9d9;
}

.series {
    filter: drop-shadow(0 1px 1px rgba(0, 0, 0, 0.4));
}

.series polyline, .series path {
    fill: none;
    stroke-width: 1.2;
}

/* scroll bars */
.arrow {
    border: 4px solid transparent;
}

.up { border-bottom-color: #666; border-top: none; }
.down { border-top-color: #666; border-bottom: none; }
.left { border-right-color: #666; border-left: none; }
.right { border-left-color: #666; border-right: none; }

.scroll-v {
    display: flex;
    flex-direction: column;
    width: 21px;
    padding: 2px 3px 0;
}

.scroll-v button, .scroll-h button {
    flex: none;
    width: 15px;
    height: 15px;
    background: #fff;
    border: 1px solid #ababab;
}

.track {
    flex: 1;
    display: flex;
    background: #dadada;
}

.thumb {
    background: #fff;
    border: 1px solid #ababab;
}

.scroll-v .thumb {
    width: 15px;
    height: 97%;
}

.scroll-h {
    display: flex;
    width: 509px;
    margin-right: 21px;
}

.scroll-h .thumb {
    width: 96%;
}

/* sheet tabs */
.sheet-bar {
    display: flex;
    align-items: center;
    flex: none;
    height: 28px;
    border-bottom: 1px solid var(--line);
}

.nav-arrow {
    width: 28px;
    opacity: 0.3;
}

.nav-arrow:first-child {
    margin-left: 15px;
}

.sheet-tab {
    align-self: flex-start;
    width: 60px;
    height: 25px;
    margin-left: 29px;
    padding-top: 2px;
    background: #fff;
    border: 1px solid #ababab;
    border-top: none;
    border-bottom: 2px solid var(--green);
    color: var(--green);
    font-size: 12px;
    font-weight: 700;
}

.add-sheet {
    margin-left: 32px;
}

.sheet-bar .grip {
    margin-left: auto;
}

/* status bar */
.status-bar {
    display: flex;
    align-items: center;
    flex: none;
    height: 22px;
    padding-right: 14px;
    background: var(--ribbon);
}

.status {
    margin-right: auto;
    padding: 0 0 2px 8px;
}

.view {
    width: 38px;
    height: 22px;
}

.view.active {
    background: #c9c9c9;
}

.zoom-step {
    width: 11px;
    height: 22px;
    margin: 0 2px;
}

.zoom {
    appearance: none;
    width: 100px;
    height: 12px;
    background: linear-gradient(#a6a6a6, #a6a6a6) center / 100% 1px no-repeat, linear-gradient(#a6a6a6, #a6a6a6) center / 1px 5px no-repeat;
}

.zoom::-webkit-slider-thumb {
    appearance: none;
    width: 4px;
    height: 11px;
    background: #555;
}

.zoom-value {
    width: 35px;
    padding-bottom: 2px;
    text-align: right;
}

/* system taskbar */
.taskbar {
    display: flex;
    align-items: center;
    flex: none;
    height: 40px;
    background: linear-gradient(rgba(255, 255, 255, 0.1), transparent 30%), linear-gradient(90deg, #0c0c0c 20%, #2f2723 24%, #3b322d 40%, #2b2521 55%, #37302b 70%, #141312 80%, #101214);
    border-top: 1px solid #111;
    color: #fff;
    font-size: 12px;
}

.show-desktop {
    align-self: stretch;
    width: 14px;
    background: linear-gradient(160deg, #555, #111 40%);
    border: 1px solid #666;
}

.clock {
    width: 92px;
    line-height: 17px;
    text-align: center;
}

.tray {
    display: flex;
    align-items: center;
    gap: 12px;
    margin-left: 7px;
    padding-top: 3px;
}

.lang {
    margin-left: 16px;
    padding-bottom: 4px;
}

.chevrons {
    margin-left: 10px;
    padding-bottom: 22px;
    font-size: 16px;
}

.desktop {
    margin: 0 15px 0 8px;
    padding-bottom: 2px;
    font-size: 14px;
}

.apps {
    display: flex;
    gap: 4px;
    margin-left: auto;
    height: 100%;
}

.app {
    width: 58px;
    height: 38px;
}

.app:last-child {
    width: 56px;
}

.app.current, .app.open {
    border: 1px solid #b5b5b5;
    border-radius: 3px;
    background: linear-gradient(115deg, #b9b9b9, #8c8c8c 60%, #c4c4c4);
}

.app.open {
    border-color: #8a8a8a;
    background: linear-gradient(115deg, #5d5d5d, #333 60%, #555);
}
```
